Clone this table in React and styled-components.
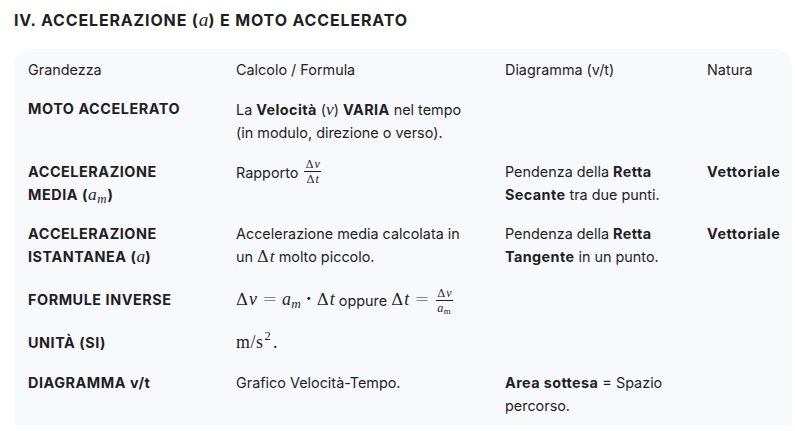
import React from "react";
import styled, { createGlobalStyle } from "styled-components";

const Global = createGlobalStyle`
  *, *::before, *::after { box-sizing: border-box; }
  html, body { margin: 0; padding: 0; background: #ffffff; }
  body { font-family: Inter, "Noto Sans", Roboto, sans-serif; color: #1f1f1f; }
`;

const Page = styled.div`
  padding: 8px 3px 0 14px;
`;

const Title = styled.h3`
  margin: 0 0 17px 0;
  font-size: 16px;
  line-height: 24px;
  font-weight: 700;
  letter-spacing: 0.85px;
  color: #1f1f1f;
`;

const Panel = styled.div`
  background: #f8f9fd;
  border-radius: 16px 16px 4px 4px;
  display: grid;
  grid-template-columns: 208px 269px 202px 1fr;
`;

const Next = styled.div`
  margin-top: 5px;
  height: 20px;
  background: #f9fafd;
  border-radius: 4px 4px 0 0;
`;

const Cell = styled.div`
  padding: ${(p) => (p.$pt != null ? p.$pt : 8)}px 14px 8px 14px;
  font-size: 14.4px;
  line-height: 23px;
  font-weight: ${(p) => (p.$bold ? 700 : 400)};
  letter-spacing: ${(p) => (p.$bold ? "0.55px" : "0")};
  color: #1f1f1f;
  min-height: ${(p) => p.$h || 0}px;
  white-space: ${(p) => (p.$nowrap ? "nowrap" : "normal")};
`;

const B = styled.b`
  font-weight: 700;
  letter-spacing: 0.4px;
`;

const M = styled.span`
  font-family: "Liberation Serif", "DejaVu Serif", serif;
  font-size: ${(p) => p.$fs || 1.21}em;
  line-height: 1;
  font-weight: 400;
  font-style: ${(p) => (p.$up ? "normal" : "italic")};
  letter-spacing: ${(p) => (p.$up ? "0.6px" : "0")};
`;

const Delta = styled.span`
  font-family: "DejaVu Serif", "Liberation Serif", serif;
  font-style: normal;
  font-size: 0.93em;
  margin-right: 1px;
`;

const Sub = styled.sub`
  font-size: 0.74em;
  vertical-align: -0.25em;
  line-height: 0;
  margin: 0 1px 0 0.5px;
`;

const Sup = styled.sup`
  font-size: 0.7em;
  line-height: 0;
  vertical-align: 0.62em;
  font-style: normal;
  margin: 0 1.5px 0 1px;
`;

const Frac = styled.span`
  display: inline-flex;
  flex-direction: column;
  align-items: center;
  vertical-align: middle;
  font-family: "Liberation Serif", "DejaVu Serif", serif;
  font-size: 0.84em;
  font-weight: 400;
  letter-spacing: 0;
  line-height: 1;
  margin: 0 2px;
  position: relative;
  top: ${(p) => p.$top || 0}px;
`;

const Num = styled.span`
  padding: 0 1px 1px;
  border-bottom: 1px solid #1f1f1f;
`;

const Den = styled.span`
  padding: 1px 1px 0;
`;

const Op = styled.span`
  display: inline-block;
  font-style: normal;
  text-align: center;
  font-family: "DejaVu Sans", "Liberation Serif", serif;
  font-weight: 300;
  width: 0.8em;
  margin: 0 0.3em;
`;

const Dot = styled.span`
  font-style: normal;
  font-family: "Liberation Serif", serif;
  font-weight: 700;
  margin: 0 5px 0 4px;
`;

const D = () => <Delta>Δ</Delta>;

export default function App() {
  return (
    <>
      <Global />
      <Page>
        <Title>
          IV. ACCELERAZIONE (<M>a</M>) E MOTO ACCELERATO
        </Title>
        <Panel>
          <Cell $pt={8.5}>Grandezza</Cell>
          <Cell $pt={8.5}>Calcolo / Formula</Cell>
          <Cell $pt={8.5}>Diagramma (v/t)</Cell>
          <Cell $pt={8.5}>Natura</Cell>

          <Cell $bold>MOTO ACCELERATO</Cell>
          <Cell $pt={9}>
            La <B>Velocità</B> (<M>v</M>) <B>VARIA</B> nel tempo (in modulo, direzione o verso).
          </Cell>
          <Cell />
          <Cell />

          <Cell $bold>
            ACCELERAZIONE MEDIA (<M>a<Sub>m</Sub></M>)
          </Cell>
          <Cell>
            Rapporto{" "}
            <Frac $top={-2}>
              <Num>
                <D />
                <i>v</i>
              </Num>
              <Den>
                <D />
                <i>t</i>
              </Den>
            </Frac>
          </Cell>
          <Cell>
            Pendenza della <B>Retta Secante</B> tra due punti.
          </Cell>
          <Cell $bold>Vettoriale</Cell>

          <Cell $bold>
            ACCELERAZIONE ISTANTANEA (<M>a</M>)
          </Cell>
          <Cell>
            Accelerazione media calcolata in un{" "}
            <M>
              <D />t
            </M>{" "}
            molto piccolo.
          </Cell>
          <Cell>
            Pendenza della <B>Retta Tangente</B> in un punto.
          </Cell>
          <Cell $bold>Vettoriale</Cell>

          <Cell $bold $h={48} $pt={12}>
            FORMULE INVERSE
          </Cell>
          <Cell $h={48} $pt={12} $nowrap>
            <M $fs={1.24}>
              <D />v<Op>=</Op>a<Sub>m</Sub>
              <Dot>·</Dot>
              <D />t
            </M>{" "}
            oppure{" "}
            <M $fs={1.24}>
              <D />t<Op>=</Op>
            </M>
            <Frac $top={-1}>
              <Num>
                <D />
                <i>v</i>
              </Num>
              <Den>
                <i>a</i>
                <Sub>m</Sub>
              </Den>
            </Frac>
          </Cell>
          <Cell $h={48} />
          <Cell $h={48} />

          <Cell $bold $h={39} $pt={7}>
            UNITÀ (SI)
          </Cell>
          <Cell $h={39} $pt={7}>
            <M $up $fs={1.24}>
              m/s<Sup>2</Sup>.
            </M>
          </Cell>
          <Cell $h={39} />
          <Cell $h={39} />

          <Cell $bold>DIAGRAMMA v/t</Cell>
          <Cell>Grafico Velocità-Tempo.</Cell>
          <Cell>
            <B>Area sottesa</B> = Spazio percorso.
          </Cell>
          <Cell />
        </Panel>
        <Next />
      </Page>
    </>
  );
}
